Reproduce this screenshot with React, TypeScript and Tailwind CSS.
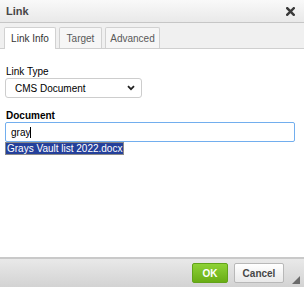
import React from "react";

export default function App() {
  return (
    <div className="w-[304px] h-[287px] flex flex-col bg-white overflow-hidden" style={{ fontFamily: "'Liberation Sans', Arial, sans-serif" }}>
      {/* Title bar */}
      <div className="h-[23px] shrink-0 flex items-center justify-between pl-[6px] pr-[9px] bg-gradient-to-b from-[#f9f9f9] to-[#e9e9e9] border-b border-[#c6c6c6]">
        <span className="text-[11px] font-bold text-[#474747]">Link</span>
        <svg width="9" height="9" viewBox="0 0 9 9" className="mt-[1px]">
          <path d="M1.2 1.2 L7.8 7.8 M7.8 1.2 L1.2 7.8" stroke="#3a3a3a" strokeWidth="2.4" strokeLinecap="square" />
        </svg>
      </div>
      {/* Tabs */}
      <div className="h-[26px] shrink-0 bg-[#f0f0f0] border-b border-[#cfcfcf] flex items-end pl-[4px] gap-[3px]">
        <div className="h-[22px] w-[52px] flex items-center justify-center bg-white border border-[#d1d1d1] border-b-0 rounded-t-[2px] text-[10px] text-[#333] mb-[-1px] pb-[1px]">Link Info</div>
        <div className="h-[21px] w-[43px] flex items-center justify-center bg-[#f6f6f6] border border-[#d1d1d1] border-b-0 rounded-t-[2px] text-[10px] text-[#595959]">Target</div>
        <div className="h-[21px] w-[55px] flex items-center justify-center bg-[#f6f6f6] border border-[#d1d1d1] border-b-0 rounded-t-[2px] text-[10px] text-[#595959]">Advanced</div>
      </div>
      {/* Body */}
      <div className="flex-1 pl-[5px] pt-[17px]">
        <div className="text-[10px] text-black leading-[12px] pl-[1px]">Link Type</div>
        <div className="w-[137px] h-[20px] border border-[#cdcdcd] rounded-[3px] flex items-center justify-between pl-[9px] pr-[6px] bg-white">
          <span className="text-[10px] text-black">CMS Document</span>
          <svg width="8" height="6" viewBox="0 0 8 6">
            <path d="M1 1.2 L4 4.2 L7 1.2" stroke="#222" strokeWidth="1.8" fill="none" />
          </svg>
        </div>
        <div className="mt-[12px] text-[10px] font-bold text-black leading-[12px] pl-[1px]">Document</div>
        <div className="w-[290px] h-[20px] border border-[#72aeee] rounded-[2px] flex items-center pl-[5px] bg-white">
          <span className="text-[10px] text-black">gray</span>
          <span className="w-[1px] h-[11px] bg-black"></span>
        </div>
        <div className="w-fit h-[13px] flex items-center px-[1px] bg-[#24409a] text-white text-[10px] leading-[12px] border border-[#8a8a8a] whitespace-nowrap">Grays Vault list 2022.docx</div>
      </div>
      {/* Footer */}
      <div className="h-[30px] shrink-0 border-t-2 border-[#c9c9c9] bg-gradient-to-b from-[#e9e9e9] to-[#d3d3d3] flex items-center justify-end pr-[20px] gap-[6px] relative">
        <div className="h-[20px] w-[36px] flex items-center justify-center rounded-[2px] bg-gradient-to-b from-[#8ed235] to-[#69ad14] border border-[#62a31a] text-white text-[10px] font-bold">OK</div>
        <div className="h-[20px] w-[50px] flex items-center justify-center rounded-[2px] bg-gradient-to-b from-[#ffffff] to-[#e9e9e9] border border-[#b8b8b8] text-[#474747] text-[10px] font-bold">Cancel</div>
        <svg width="8" height="8" viewBox="0 0 8 8" className="absolute right-[4px] bottom-[3px]">
          <path d="M8 0 L8 8 L0 8 Z" fill="#6a6a6a" />
        </svg>
      </div>
    </div>
  );
}
